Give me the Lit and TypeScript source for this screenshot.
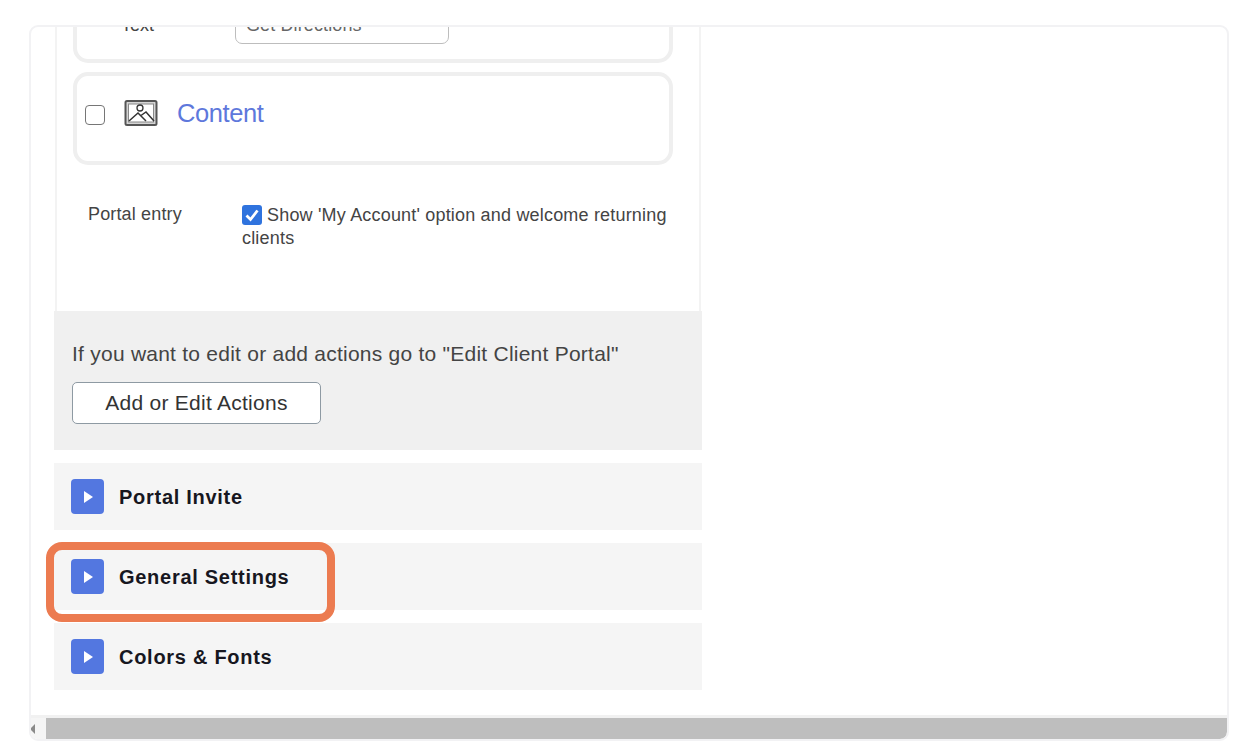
import { LitElement, html, css } from "lit";
import { customElement } from "lit/decorators.js";

@customElement("app-root")
export class AppRoot extends LitElement {
  static styles = css`
    :host {
      display: block;
      width: 1256px;
      height: 752px;
      background: #fff;
      overflow: hidden;
      font-family: "Liberation Sans", Arial, sans-serif;
      color: #333;
    }
    .page { padding: 25px 27px 11px 29px; height: 752px; box-sizing: border-box; }
    .frame {
      position: relative;
      height: 716px;
      box-sizing: border-box;
      border: 2px solid #f2f2f4;
      border-radius: 9px;
      overflow: hidden;
      display: flex;
      flex-direction: column;
    }
    .view { flex: 1; min-height: 0; overflow: hidden; padding-left: 23px; }
    .column { width: 648px; }
    .form {
      margin: 0 1px;
      height: 284px;
      box-sizing: border-box;
      border-left: 2px solid #f3f3f3;
      border-right: 2px solid #f3f3f3;
      padding: 0 16px;
      overflow: hidden;
    }
    .card {
      box-sizing: border-box;
      width: 600px;
      border: 4px solid #efefef;
      border-radius: 15px;
      background: #fff;
    }
    .card.first {
      height: 66px;
      margin-top: -30px;
      padding: 0 0 0 44px;
      display: flex;
    }
    .card.first .lbl { width: 114px; padding-top: 14px; font-size: 18px; color: #444; line-height: 20px; }
    .field {
      box-sizing: border-box;
      width: 214px;
      height: 43px;
      border: 1.5px solid #bdbdbd;
      border-radius: 7px;
      padding: 13px 10px 0;
      font-size: 18px;
      letter-spacing: 0.12px;
      line-height: 20px;
      color: #666;
    }
    .card.second {
      height: 93px;
      margin-top: 9px;
      display: flex;
      align-items: flex-start;
      padding: 20px 0 0 8px;
    }
    .check {
      box-sizing: border-box;
      width: 20px;
      height: 20px;
      margin-top: 9px;
      border: 1.5px solid #767676;
      border-radius: 4px;
      background: #fff;
      flex: none;
    }
    .pic { display: block; margin: 4px 0 0 19px; flex: none; }
    .title { margin: 2px 0 0 19px; font-size: 25.5px; letter-spacing: -0.4px; line-height: 30px; color: #5e78dc; }
    .entry { display: flex; margin-top: 37px; padding-left: 15px; }
    .entry .name { width: 154px; font-size: 18px; letter-spacing: 0.15px; line-height: 22px; color: #444; padding-top: 1px; flex: none; }
    .entry .desc { width: 436px; font-size: 18px; letter-spacing: 0.185px; line-height: 23px; color: #444; padding-top: 2px; }
    .tick {
      display: inline-block;
      width: 20px;
      height: 20px;
      vertical-align: -4px;
      margin-right: 5px;
      background: #2f73de;
      border-radius: 3px;
    }
    .tick svg { display: block; }
    .foot {
      box-sizing: border-box;
      height: 139px;
      background: #f0f0f0;
      padding: 30px 18px 0;
    }
    .foot p { margin: 0; font-size: 21px; letter-spacing: 0.24px; line-height: 26px; color: #444; }
    .btn {
      box-sizing: border-box;
      display: flex;
      align-items: center;
      justify-content: center;
      width: 249px;
      height: 42px;
      margin-top: 15px;
      background: #fff;
      border: 1.5px solid #8e9aa3;
      border-radius: 5px;
      font-size: 21px;
      letter-spacing: 0.26px;
      color: #333;
    }
    .acc {
      box-sizing: border-box;
      height: 67px;
      margin-top: 13px;
      background: #f5f5f5;
      display: flex;
      align-items: center;
      padding: 0 0 0 17px;
      gap: 15px;
    }
    .arrow {
      width: 33px;
      height: 35px;
      background: #5377e0;
      border-radius: 4px;
      display: flex;
      align-items: center;
      justify-content: center;
      flex: none;
    }
    .arrow svg { display: block; margin-left: 2px; }
    .acc span { font-size: 20px; font-weight: 700; color: #17171f; letter-spacing: 0.72px; margin-top: 2px; }
    .bar {
      height: 24px;
      box-sizing: border-box;
      border-top: 3px solid #f1f1f1;
      display: flex;
      flex: none;
    }
    .bar .left { width: 15px; display: flex; align-items: center; background: #f5f5f5; }
    .bar .left svg { display: block; margin-left: -1px; }
    .bar .thumb { flex: 1; background: #bebebe; border-radius: 0 0 7px 0; }
    .mark {
      position: absolute;
      left: 15px;
      top: 515px;
      width: 289px;
      height: 80px;
      box-sizing: border-box;
      border: 8px solid #ec7b50;
      border-radius: 16px;
      pointer-events: none;
    }
  `;

  private accordion(label: string) {
    return html`<div class="acc">
      <div class="arrow">
        <svg width="9" height="12" viewBox="0 0 9 12"><path d="M0 0l9 6-9 6z" fill="#fff"/></svg>
      </div>
      <span>${label}</span>
    </div>`;
  }

  render() {
    return html`<div class="page">
      <div class="frame">
        <div class="view">
          <div class="column">
            <div class="form">
              <div class="card first">
                <div class="lbl">Text</div>
                <div class="field">Get Directions</div>
              </div>
              <div class="card second">
                <div class="check"></div>
                <svg class="pic" width="34" height="26" viewBox="0 0 34 26" fill="none">
                  <rect x="1.5" y="1" width="31" height="24" rx="1.5" fill="#d4d4d4" stroke="#555" stroke-width="2"/>
                  <rect x="4.5" y="4" width="25" height="18" fill="#fff" stroke="#888" stroke-width="1"/>
                  <circle cx="16" cy="8" r="3" stroke="#333" stroke-width="1.3"/>
                  <path d="M5 21l9-8 8 8M17 15.5l5-3.5 8 9" stroke="#333" stroke-width="1.5"/>
                </svg>
                <div class="title">Content</div>
              </div>
              <div class="entry">
                <div class="name">Portal entry</div>
                <div class="desc"><span class="tick"><svg width="20" height="20" viewBox="0 0 20 20"><path d="M4.5 10.5l4 4 7-9" fill="none" stroke="#fff" stroke-width="2.8"/></svg></span>Show 'My Account' option and welcome returning clients</div>
              </div>
            </div>
            <div class="foot">
              <p>If you want to edit or add actions go to "Edit Client Portal"</p>
              <div class="btn">Add or Edit Actions</div>
            </div>
            ${this.accordion("Portal Invite")}
            ${this.accordion("General Settings")}
            ${this.accordion("Colors & Fonts")}
          </div>
        </div>
        <div class="bar">
          <div class="left"><svg width="6" height="12" viewBox="0 0 6 12"><path d="M5 1L0 6l5 5z" fill="#8a8a8a"/></svg></div>
          <div class="thumb"></div>
        </div>
        <div class="mark"></div>
      </div>
    </div>`;
  }
}
